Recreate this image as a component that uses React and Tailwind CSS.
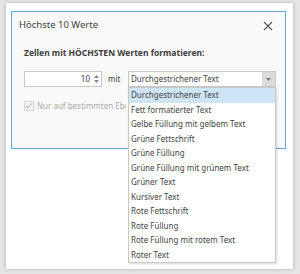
import React from 'react';

const options = [
  'Durchgestrichener Text',
  'Fett formatierter Text',
  'Gelbe Füllung mit gelbem Text',
  'Grüne Fettschrift',
  'Grüne Füllung',
  'Grüne Füllung mit grünem Text',
  'Grüner Text',
  'Kursiver Text',
  'Rote Fettschrift',
  'Rote Füllung',
  'Rote Füllung mit rotem Text',
  'Roter Text',
];

const App = () => {
  return (
    <div className="w-[300px] h-[274px] bg-[#e6e6e6] pt-[3px] pl-[6px] font-['Noto_Sans',sans-serif] text-[#444]">
      <div className="w-[287px] h-[266px] bg-white shadow-[0_0_4px_rgba(0,0,0,0.25)] pt-[8px] pl-[5px]">
        <div className="relative w-[275px] h-[138px] bg-[#f9f9f9] border border-[#6ea6dc]">
          {/* title bar */}
          <div className="flex items-center justify-between h-[24px] pl-[7px] pr-[12px] pt-[2px]">
            <span className="text-[9.5px]">Höchste 10 Werte</span>
            <svg width="10" height="10" viewBox="0 0 10 10" className="mt-[1px]">
              <path d="M1 1 L9 9 M9 1 L1 9" stroke="#555" strokeWidth="1.1" />
            </svg>
          </div>

          <div className="pl-[12px] pt-[10px]">
            <div className="text-[8.5px] font-bold leading-[14px] text-[#3c3c3c]">Zellen mit HÖCHSTEN Werten formatieren:</div>

            <div className="flex items-center mt-[11px]">
              <div className="flex items-center justify-end w-[78px] h-[16px] bg-white border border-[#c8c8c8] pr-[2px]">
                <span className="text-[8px] leading-none mr-[4px]">10</span>
                <div className="flex flex-col items-center gap-[2px]">
                  <svg width="5" height="3" viewBox="0 0 5 3"><path d="M0 3 L2.5 0 L5 3 Z" fill="#888" /></svg>
                  <svg width="5" height="3" viewBox="0 0 5 3"><path d="M0 0 L2.5 3 L5 0 Z" fill="#888" /></svg>
                </div>
              </div>
              <span className="text-[8px] ml-[6px] w-[20px]">mit</span>

              <div className="relative">
                <div className="flex items-center w-[148px] h-[16px] bg-white border border-[#c8c8c8]">
                  <span className="flex-1 text-[8px] pl-[2px] leading-none">Durchgestrichener Text</span>
                  <div className="w-[13px] h-full bg-[#dcdcdc] flex items-center justify-center">
                    <svg width="5" height="3" viewBox="0 0 5 3"><path d="M0 0 L2.5 3 L5 0 Z" fill="#777" /></svg>
                  </div>
                </div>
                <div className="absolute left-0 top-[16px] w-[148px] bg-white border border-[#c8c8c8] shadow-[1px_1px_2px_rgba(0,0,0,0.15)] z-10">
                  {options.map((o, i) => (
                    <div
                      key={o}
                      className={
                        'h-[14.5px] flex items-center pl-[2px] text-[8px] leading-none whitespace-nowrap ' +
                        (i === 0 ? 'bg-[#cde5f7]' : '')
                      }
                    >
                      {o}
                    </div>
                  ))}
                </div>
              </div>
            </div>

            <div className="flex items-center mt-[13px] text-[#aaa]">
              <div className="w-[10px] h-[10px] border border-[#d6d6d6] bg-[#f4f4f4] flex items-center justify-center">
                <svg width="8" height="8" viewBox="0 0 8 8"><path d="M1 4 L3 6 L7 1" stroke="#c0c0c0" strokeWidth="1.2" fill="none" /></svg>
              </div>
              {/* label runs under the open list, so only its start shows */}
              <span className="text-[8px] ml-[3px] whitespace-nowrap w-[89px] overflow-hidden">Nur auf bestimmten Ebenen anwenden</span>
            </div>
          </div>
        </div>
      </div>
    </div>
  );
};

export default App;
